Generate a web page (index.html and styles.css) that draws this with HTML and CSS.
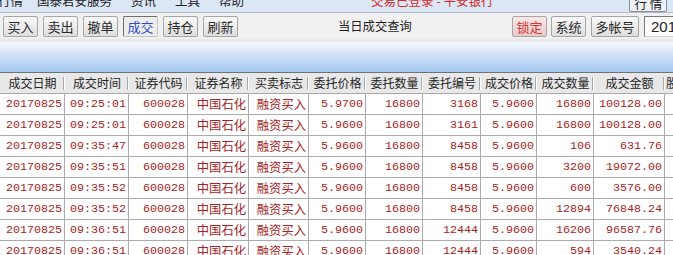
FILE: index.html
```html
<!DOCTYPE html>
<html lang="zh-CN">

<head>
  <meta charset="utf-8" />
  <title>当日成交查询</title>
  <link rel="stylesheet" href="styles.css">
</head>

<body>
  <div class="ventana">
    <div class="menubar">
      <span class="menu primero">行情</span>
      <span class="menu">国泰君安服务</span>
      <span class="menu">资讯</span>
      <span class="menu">工具</span>
      <span class="menu">帮助</span>
      <span class="login">交易已登录 - 平安银行</span>
      <span class="hq">行 情</span>
    </div>

    <div class="toolbar">
      <button class="btn" type="button">买入</button>
      <button class="btn" type="button">卖出</button>
      <button class="btn" type="button">撤单</button>
      <button class="btn activo" type="button">成交</button>
      <button class="btn" type="button">持仓</button>
      <button class="btn" type="button">刷新</button>
      <span class="titulo">当日成交查询</span>
      <button class="btn bloqueo" type="button">锁定</button>
      <button class="btn" type="button">系统</button>
      <button class="btn ancho" type="button">多帐号</button>
      <input class="fecha" type="text" value="20170825" />
    </div>

    <div class="franja"></div>
    <div class="banda"></div>

    <table class="grid">
      <colgroup>
        <col style="width:65px">
        <col style="width:64px">
        <col style="width:59px">
        <col style="width:61px">
        <col style="width:60px">
        <col style="width:57px">
        <col style="width:57px">
        <col style="width:58px">
        <col style="width:56px">
        <col style="width:57px">
        <col style="width:71px">
        <col style="width:80px">
      </colgroup>
      <thead>
        <tr>
          <th>成交日期</th>
          <th>成交时间</th>
          <th>证券代码</th>
          <th>证券名称</th>
          <th>买卖标志</th>
          <th>委托价格</th>
          <th>委托数量</th>
          <th>委托编号</th>
          <th>成交价格</th>
          <th>成交数量</th>
          <th>成交金额</th>
          <th class="ultimo">股东代码</th>
        </tr>
      </thead>
      <tbody id="filas"></tbody>
    </table>
  </div>

  <script>
    var datos = [
      ['09:25:01', '5.9700', '3168', '16800', '100128.00'],
      ['09:25:01', '5.9600', '3161', '16800', '100128.00'],
      ['09:35:47', '5.9600', '8458', '106', '631.76'],
      ['09:35:51', '5.9600', '8458', '3200', '19072.00'],
      ['09:35:52', '5.9600', '8458', '600', '3576.00'],
      ['09:35:52', '5.9600', '8458', '12894', '76848.24'],
      ['09:36:51', '5.9600', '12444', '16206', '96587.76'],
      ['09:36:51', '5.9600', '12444', '594', '3540.24']
    ];

    var html = '';
    datos.forEach(function (d) {
      html +=
        '<tr>' +
        '<td>20170825</td>' +
        '<td>' + d[0] + '</td>' +
        '<td>600028</td>' +
        '<td class="cn">中国石化</td>' +
        '<td class="cn">融资买入</td>' +
        '<td>' + d[1] + '</td>' +
        '<td>16800</td>' +
        '<td>' + d[2] + '</td>' +
        '<td>5.9600</td>' +
        '<td>' + d[3] + '</td>' +
        '<td>' + d[4] + '</td>' +
        '<td></td>' +
        '</tr>';
    });
    document.getElementById('filas').innerHTML = html;
  </script>
</body>

</html>
```

FILE: styles.css
```css
body {
  margin: 0;
  background-color: #fff;
  overflow: hidden;
  font-family: "Noto Sans CJK SC", sans-serif;
  color: #222;
}

.ventana {
  width: 745px;
}

/* barra de menu, cortada arriba */
.menubar {
  display: flex;
  height: 12px;
  overflow: hidden;
  background-color: #dce7f6;
  border-bottom: 1px solid #b4bccb;
  font-size: 12.5px;
  line-height: 13px;
}

.menubar span {
  margin-top: -6px;
}

.menu {
  margin-right: 19px;
}

.primero {
  margin-left: -2px;
  margin-right: 14px;
}

.login {
  margin-left: 108px;
  color: #d42a2a;
}

.hq {
  margin-left: 135px;
  width: 38px;
  height: 18px;
  padding-left: 5px;
  border: 1px solid #8a8f98;
  border-radius: 2px;
  background-color: #eef2f8;
  box-sizing: border-box;
  line-height: 18px;
}

/* barra de botones */
.toolbar {
  display: flex;
  align-items: center;
  height: 26px;
  padding-left: 3px;
  background-color: #f1f1f1;
}

.btn {
  flex-shrink: 0;
  width: 35px;
  height: 21px;
  margin-right: 5px;
  padding: 0;
  border: 1px solid #a6a6a6;
  border-radius: 2px;
  background: linear-gradient(#fafafa, #dedede);
  font-family: "Noto Sans CJK SC", sans-serif;
  font-size: 13px;
  line-height: 19px;
  color: #2a2a2a;
}

.activo {
  border-color: #6e6e6e #c4c4c4 #c4c4c4 #6e6e6e;
  background: #ededed;
  color: #2f4fc4;
}

.bloqueo {
  margin-left: auto;
  margin-right: 4px;
  background: linear-gradient(#fbe8e8, #ecc9c9);
  color: #d23a3a;
}

.ancho {
  width: 48px;
}

.titulo {
  margin-left: 95px;
  font-size: 12.3px;
  color: #1e1e1e;
}

.fecha {
  flex-shrink: 0;
  width: 97px;
  height: 21px;
  margin-right: 4px;
  padding: 0 6px;
  box-sizing: border-box;
  border: 1px solid;
  border-color: #7a7a7a #d0d0d0 #d0d0d0 #7a7a7a;
  background-color: #fff;
  font-family: "Liberation Sans", sans-serif;
  font-size: 15px;
  color: #222;
}

.franja {
  height: 3px;
  background-color: #e9e9e9;
}

.banda {
  height: 30px;
  background: linear-gradient(#f6f9fe, #cfe0f7 45%, #a6c8f1);
}

/* tabla de operaciones */
.grid {
  width: 745px;
  table-layout: fixed;
  border-collapse: separate;
  border-spacing: 0;
}

.grid th {
  padding: 0;
  border-top: 1px solid #6f7378;
  border-bottom: 1px solid #a9a9a9;
  background:
    linear-gradient(#a8a8a8, #a8a8a8) right 1px center / 1px 13px no-repeat,
    linear-gradient(#fff, #fff) right center / 1px 13px no-repeat,
    #e8e8e8;
  font-size: 12px;
  font-weight: normal;
  line-height: 20px;
  color: #262626;
  white-space: nowrap;
  overflow: hidden;
}

.grid th.ultimo {
  text-align: left;
  padding-left: 1px;
}

.grid td {
  padding: 0 2px 0 0;
  border-right: 1px solid #ababab;
  border-bottom: 1px solid #ababab;
  font-family: "Liberation Mono", "Noto Sans CJK SC", monospace;
  font-size: 11.7px;
  line-height: 20px;
  text-align: right;
  color: #a32424;
  white-space: nowrap;
  overflow: hidden;
}

.grid td.cn {
  font-family: "Noto Sans CJK SC", sans-serif;
  font-size: 12.3px;
}
```
